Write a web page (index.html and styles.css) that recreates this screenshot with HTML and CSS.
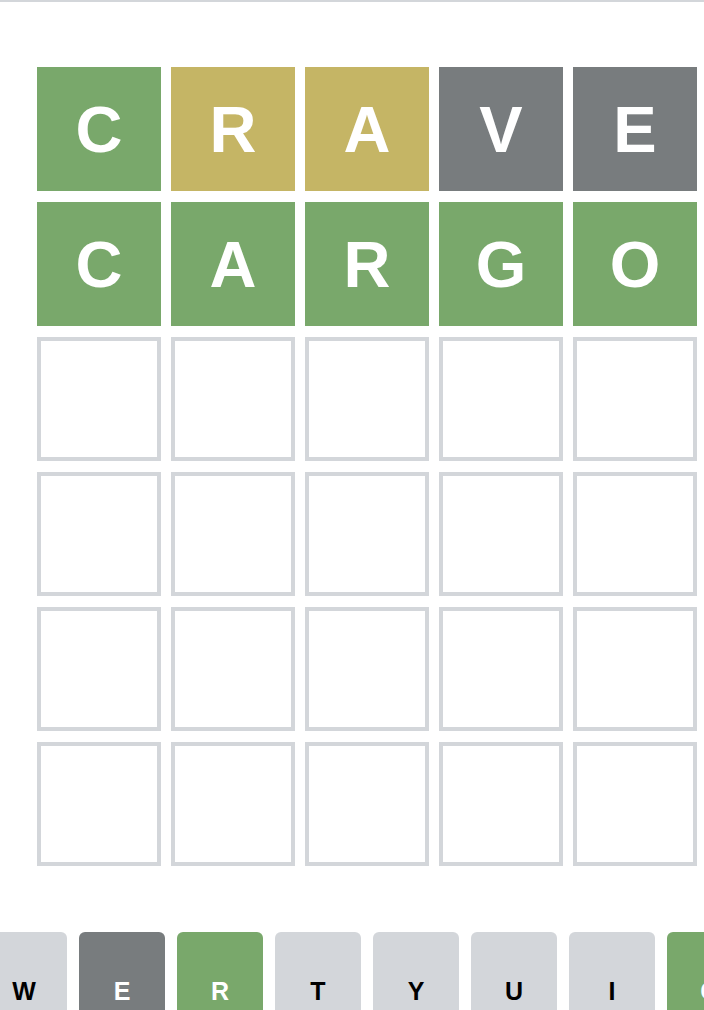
FILE: index.html
```html
<!DOCTYPE html>
<html lang="en">
<head>
<meta charset="utf-8">
<title>Wordle</title>
<link rel="stylesheet" href="styles.css">
</head>
<body>
<div class="topline"></div>
<main class="game">
  <div class="board">
    <div class="tile correct">C</div>
    <div class="tile present">R</div>
    <div class="tile present">A</div>
    <div class="tile absent">V</div>
    <div class="tile absent">E</div>

    <div class="tile correct">C</div>
    <div class="tile correct">A</div>
    <div class="tile correct">R</div>
    <div class="tile correct">G</div>
    <div class="tile correct">O</div>

    <div class="tile empty"></div><div class="tile empty"></div><div class="tile empty"></div><div class="tile empty"></div><div class="tile empty"></div>
    <div class="tile empty"></div><div class="tile empty"></div><div class="tile empty"></div><div class="tile empty"></div><div class="tile empty"></div>
    <div class="tile empty"></div><div class="tile empty"></div><div class="tile empty"></div><div class="tile empty"></div><div class="tile empty"></div>
    <div class="tile empty"></div><div class="tile empty"></div><div class="tile empty"></div><div class="tile empty"></div><div class="tile empty"></div>
  </div>
  <div class="keyboard">
    <div class="key-row">
      <button class="key">Q</button>
      <button class="key">W</button>
      <button class="key k-absent">E</button>
      <button class="key k-correct">R</button>
      <button class="key">T</button>
      <button class="key">Y</button>
      <button class="key">U</button>
      <button class="key">I</button>
      <button class="key k-correct">O</button>
      <button class="key">P</button>
    </div>
  </div>
</main>
</body>
</html>
```
FILE: styles.css
```css
html, body {
  margin: 0;
  padding: 0;
  background: #ffffff;
  overflow: hidden;
}
body {
  width: 704px;
  height: 1010px;
  font-family: "Liberation Sans", Arial, Helvetica, sans-serif;
}
.topline {
  height: 2px;
  background: #d3d6da;
}
.game {
  width: 734px;
  display: flex;
  flex-direction: column;
  align-items: center;
}
.board {
  margin-top: 65px;
  display: grid;
  grid-template-columns: repeat(5, 124px);
  grid-auto-rows: 124px;
  column-gap: 10px;
  row-gap: 11px;
}
.tile {
  box-sizing: border-box;
  display: flex;
  align-items: center;
  justify-content: center;
  color: #ffffff;
  font-weight: 700;
  font-size: 65px;
  line-height: 1;
  text-transform: uppercase;
}
.correct { background: #79a86b; }
.present { background: #c5b565; }
.absent { background: #787c7e; }
.empty {
  border: 4px solid #d3d6da;
  background: #ffffff;
}
.keyboard {
  margin-top: 66px;
  width: 100%;
  display: flex;
  justify-content: center;
}
.key-row {
  display: flex;
  gap: 12px;
  flex-shrink: 0;
}
.key {
  flex: 0 0 86px;
  width: 86px;
  height: 118px;
  border: 0;
  padding: 0;
  border-radius: 6px;
  background: #d3d6da;
  color: #000000;
  font-family: "Liberation Sans", Arial, Helvetica, sans-serif;
  font-weight: 700;
  font-size: 25px;
  display: flex;
  align-items: center;
  justify-content: center;
}
.k-absent { background: #787c7e; color: #ffffff; }
.k-correct { background: #79a86b; color: #ffffff; }
```
